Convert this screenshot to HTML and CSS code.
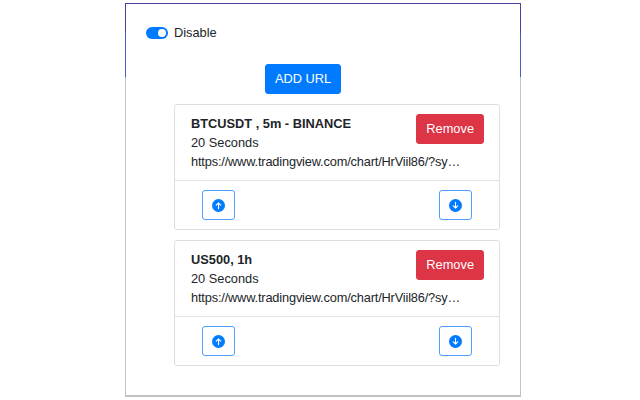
FILE: index.html
```html
<!DOCTYPE html>
<html lang="en">
<head>
    <meta charset="UTF-8">
    <meta name="viewport" content="width=device-width, initial-scale=1.0">
    <title>Chart Rotator</title>
    <link rel="stylesheet" href="styles.css">
</head>
<body>
    <div class="frame">
        <div class="popup">
            <label class="switch-row">
                <span class="switch"><span class="knob"></span></span>
                <span>Disable</span>
            </label>

            <div class="add-row">
                <button class="btn btn-primary" type="button">ADD URL</button>
            </div>

            <div class="card">
                <div class="card-body">
                    <button class="btn btn-danger remove" type="button">Remove</button>
                    <div class="title">BTCUSDT , 5m - BINANCE</div>
                    <div>20 Seconds</div>
                    <div class="url">https://www.tradingview.com/chart/HrViil86/?sy…</div>
                </div>
                <div class="card-footer">
                    <button class="btn btn-outline" type="button">
                        <svg width="13" height="13" viewBox="0 0 16 16"><circle cx="8" cy="8" r="8" fill="#007bff"/><path d="M8 12V4.8M5.2 7.6L8 4.8l2.8 2.8" stroke="#fff" stroke-width="1.4" fill="none" stroke-linecap="round" stroke-linejoin="round"/></svg>
                    </button>
                    <button class="btn btn-outline" type="button">
                        <svg width="13" height="13" viewBox="0 0 16 16"><circle cx="8" cy="8" r="8" fill="#007bff"/><path d="M8 4v7.2M5.2 8.4L8 11.2l2.8-2.8" stroke="#fff" stroke-width="1.4" fill="none" stroke-linecap="round" stroke-linejoin="round"/></svg>
                    </button>
                </div>
            </div>

            <div class="card">
                <div class="card-body">
                    <button class="btn btn-danger remove" type="button">Remove</button>
                    <div class="title">US500, 1h</div>
                    <div>20 Seconds</div>
                    <div class="url">https://www.tradingview.com/chart/HrViil86/?sy…</div>
                </div>
                <div class="card-footer">
                    <button class="btn btn-outline" type="button">
                        <svg width="13" height="13" viewBox="0 0 16 16"><circle cx="8" cy="8" r="8" fill="#007bff"/><path d="M8 12V4.8M5.2 7.6L8 4.8l2.8 2.8" stroke="#fff" stroke-width="1.4" fill="none" stroke-linecap="round" stroke-linejoin="round"/></svg>
                    </button>
                    <button class="btn btn-outline" type="button">
                        <svg width="13" height="13" viewBox="0 0 16 16"><circle cx="8" cy="8" r="8" fill="#007bff"/><path d="M8 4v7.2M5.2 8.4L8 11.2l2.8-2.8" stroke="#fff" stroke-width="1.4" fill="none" stroke-linecap="round" stroke-linejoin="round"/></svg>
                    </button>
                </div>
            </div>
        </div>
    </div>
</body>
</html>
```

FILE: styles.css
```css
body {
    margin: 0;
    background-color: #ffffff;
    font-family: "Liberation Sans", Arial, sans-serif;
    font-size: 12.8px;
    line-height: 19px;
    color: #212529;
}

.frame {
    margin: 3px 0 0 125px;
    width: 396px;
    height: 394px;
    box-sizing: border-box;
    padding: 1px 1px 2px 1px;
    background: linear-gradient(to bottom, #4b3f9f 0, #4b3f9f 30px, #3f62c6 30px, #3f62c6 74px, #c2c2c2 74px);
}

.popup {
    height: 100%;
    background-color: #ffffff;
    padding-top: 19px;
    box-sizing: border-box;
}

.switch-row {
    display: flex;
    align-items: center;
    gap: 6px;
    margin-left: 20px;
}

.switch {
    width: 22px;
    height: 12px;
    border-radius: 6px;
    background-color: #007bff;
    position: relative;
}

.knob {
    position: absolute;
    top: 2px;
    right: 2px;
    width: 8px;
    height: 8px;
    border-radius: 50%;
    background-color: #ffffff;
}

.add-row {
    margin: 22px 0 10px 139px;
}

.btn {
    font-family: inherit;
    font-size: 12.8px;
    line-height: 18px;
    padding: 5px 9px;
    border: 1px solid transparent;
    border-radius: 3px;
    cursor: pointer;
}

.btn-primary {
    background-color: #007bff;
    border-color: #007bff;
    color: #ffffff;
}

.btn-danger {
    background-color: #dc3545;
    border-color: #dc3545;
    color: #ffffff;
}

.btn-outline {
    background-color: #ffffff;
    border-color: #4da0ff;
    height: 30px;
    width: 33px;
    padding: 0;
    display: flex;
    align-items: center;
    justify-content: center;
}

.card {
    margin-left: 48px;
    width: 326px;
    border: 1px solid #dedede;
    border-radius: 3px;
    margin-bottom: 10px;
    box-sizing: border-box;
}

.card-body {
    padding: 9px 16px;
    position: relative;
}

.remove {
    position: absolute;
    top: 9px;
    right: 15px;
}

.title {
    font-weight: bold;
}

.url {
    white-space: nowrap;
    letter-spacing: -0.17px;
}

.card-footer {
    border-top: 1px solid #e3e3e3;
    padding: 9px 27px;
    display: flex;
    justify-content: space-between;
}
```
